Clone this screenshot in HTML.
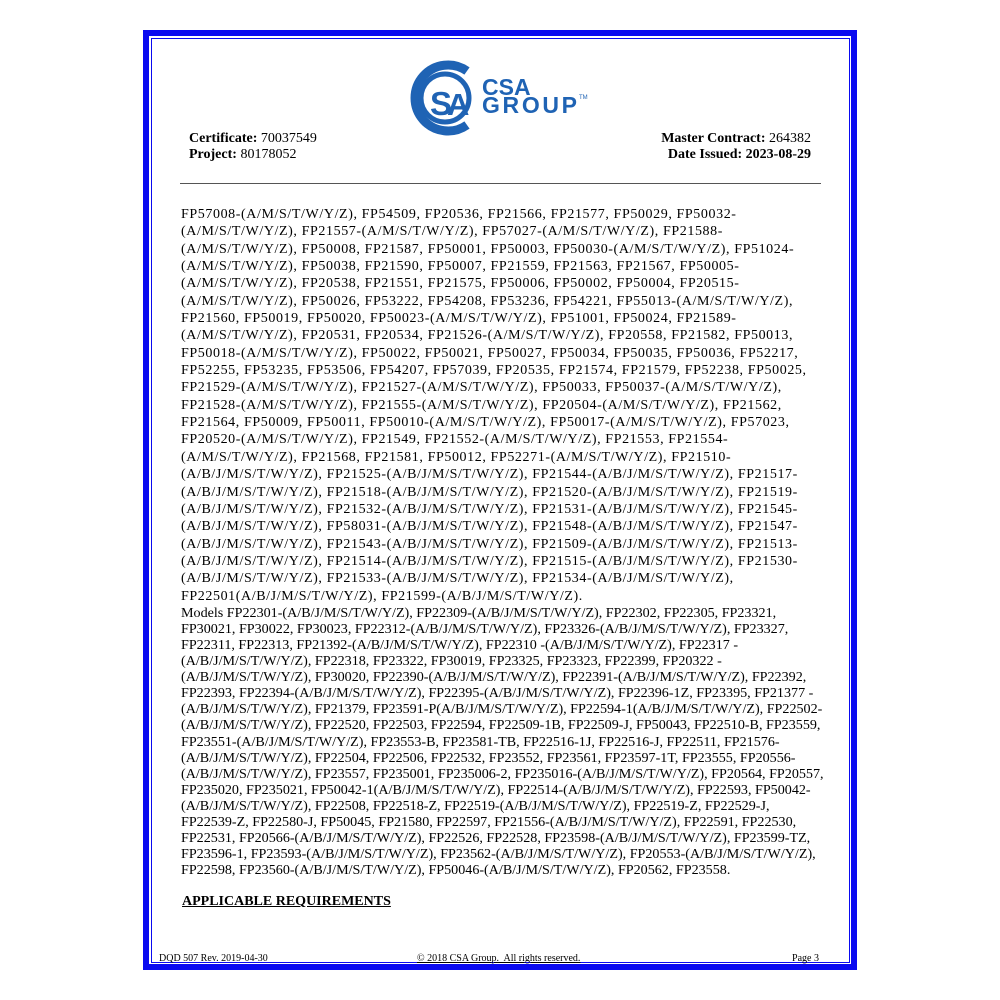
<!DOCTYPE html>
<html><head><meta charset="utf-8"><style>
body{margin:0;width:1000px;height:1000px;background:#fff;position:relative;font-family:"Liberation Serif",serif;color:#000}
.b1{position:absolute;left:143px;top:30px;width:702px;height:928px;border:6px solid #0a0af0}
.b2{position:absolute;left:151px;top:38px;width:697px;height:923px;border:1px solid #0a0af0}
.t{position:absolute;font-size:14px;white-space:nowrap;line-height:16px}
.body1{position:absolute;left:181px;top:206px;font-size:14px;letter-spacing:0.6px;line-height:17.35px;white-space:nowrap}
.body2{position:absolute;left:181px;top:605px;font-size:14.1px;line-height:16.06px;white-space:nowrap}
.f{position:absolute;top:953px;font-size:10px;white-space:nowrap}
</style></head><body>
<div class="b1"></div><div class="b2"></div>
<svg style="position:absolute;left:405px;top:55px" width="190" height="85" viewBox="0 0 190 85">
<path d="M62 16 A33 33 0 1 0 62 70" fill="none" stroke="#1f63b4" stroke-width="9"/>
<circle cx="40" cy="43" r="24" fill="#fff" stroke="#1f63b4" stroke-width="5"/>
<text x="25" y="60" font-family="Liberation Sans" font-weight="bold" font-size="33" fill="#1f63b4">S</text>
<text x="42" y="60" font-family="Liberation Sans" font-weight="bold" font-size="31" fill="#1f63b4">A</text>
<text x="77" y="40" font-family="Liberation Sans" font-weight="bold" font-size="23" fill="#1f63b4">CSA</text>
<text x="77" y="58" font-family="Liberation Sans" font-weight="bold" font-size="23" fill="#1f63b4" textLength="95">GROUP</text>
<text x="174" y="44" font-family="Liberation Sans" font-size="6" fill="#1f63b4">TM</text>
</svg>
<div class="t" style="left:189px;top:131px"><b>Certificate:</b> 70037549<br><b>Project:</b> 80178052</div>
<div class="t" style="right:189px;top:131px;text-align:right"><b>Master Contract:</b> 264382<br><b>Date Issued: 2023-08-29</b></div>
<div style="position:absolute;left:180px;top:183px;width:641px;height:1px;background:#555"></div>
<div class="body1">
FP57008-(A/M/S/T/W/Y/Z), FP54509, FP20536, FP21566, FP21577, FP50029, FP50032-<br>
(A/M/S/T/W/Y/Z), FP21557-(A/M/S/T/W/Y/Z), FP57027-(A/M/S/T/W/Y/Z), FP21588-<br>
(A/M/S/T/W/Y/Z), FP50008, FP21587, FP50001, FP50003, FP50030-(A/M/S/T/W/Y/Z), FP51024-<br>
(A/M/S/T/W/Y/Z), FP50038, FP21590, FP50007, FP21559, FP21563, FP21567, FP50005-<br>
(A/M/S/T/W/Y/Z), FP20538, FP21551, FP21575, FP50006, FP50002, FP50004, FP20515-<br>
(A/M/S/T/W/Y/Z), FP50026, FP53222, FP54208, FP53236, FP54221, FP55013-(A/M/S/T/W/Y/Z),<br>
FP21560, FP50019, FP50020, FP50023-(A/M/S/T/W/Y/Z), FP51001, FP50024, FP21589-<br>
(A/M/S/T/W/Y/Z), FP20531, FP20534, FP21526-(A/M/S/T/W/Y/Z), FP20558, FP21582, FP50013,<br>
FP50018-(A/M/S/T/W/Y/Z), FP50022, FP50021, FP50027, FP50034, FP50035, FP50036, FP52217,<br>
FP52255, FP53235, FP53506, FP54207, FP57039, FP20535, FP21574, FP21579, FP52238, FP50025,<br>
FP21529-(A/M/S/T/W/Y/Z), FP21527-(A/M/S/T/W/Y/Z), FP50033, FP50037-(A/M/S/T/W/Y/Z),<br>
FP21528-(A/M/S/T/W/Y/Z), FP21555-(A/M/S/T/W/Y/Z), FP20504-(A/M/S/T/W/Y/Z), FP21562,<br>
FP21564, FP50009, FP50011, FP50010-(A/M/S/T/W/Y/Z), FP50017-(A/M/S/T/W/Y/Z), FP57023,<br>
FP20520-(A/M/S/T/W/Y/Z), FP21549, FP21552-(A/M/S/T/W/Y/Z), FP21553, FP21554-<br>
(A/M/S/T/W/Y/Z), FP21568, FP21581, FP50012, FP52271-(A/M/S/T/W/Y/Z), FP21510-<br>
(A/B/J/M/S/T/W/Y/Z), FP21525-(A/B/J/M/S/T/W/Y/Z), FP21544-(A/B/J/M/S/T/W/Y/Z), FP21517-<br>
(A/B/J/M/S/T/W/Y/Z), FP21518-(A/B/J/M/S/T/W/Y/Z), FP21520-(A/B/J/M/S/T/W/Y/Z), FP21519-<br>
(A/B/J/M/S/T/W/Y/Z), FP21532-(A/B/J/M/S/T/W/Y/Z), FP21531-(A/B/J/M/S/T/W/Y/Z), FP21545-<br>
(A/B/J/M/S/T/W/Y/Z), FP58031-(A/B/J/M/S/T/W/Y/Z), FP21548-(A/B/J/M/S/T/W/Y/Z), FP21547-<br>
(A/B/J/M/S/T/W/Y/Z), FP21543-(A/B/J/M/S/T/W/Y/Z), FP21509-(A/B/J/M/S/T/W/Y/Z), FP21513-<br>
(A/B/J/M/S/T/W/Y/Z), FP21514-(A/B/J/M/S/T/W/Y/Z), FP21515-(A/B/J/M/S/T/W/Y/Z), FP21530-<br>
(A/B/J/M/S/T/W/Y/Z), FP21533-(A/B/J/M/S/T/W/Y/Z), FP21534-(A/B/J/M/S/T/W/Y/Z),<br>
FP22501(A/B/J/M/S/T/W/Y/Z), FP21599-(A/B/J/M/S/T/W/Y/Z).
</div>
<div class="body2">
Models FP22301-(A/B/J/M/S/T/W/Y/Z), FP22309-(A/B/J/M/S/T/W/Y/Z), FP22302, FP22305, FP23321,<br>
FP30021, FP30022, FP30023, FP22312-(A/B/J/M/S/T/W/Y/Z), FP23326-(A/B/J/M/S/T/W/Y/Z), FP23327,<br>
FP22311, FP22313, FP21392-(A/B/J/M/S/T/W/Y/Z), FP22310 -(A/B/J/M/S/T/W/Y/Z), FP22317 -<br>
(A/B/J/M/S/T/W/Y/Z), FP22318, FP23322, FP30019, FP23325, FP23323, FP22399, FP20322 -<br>
(A/B/J/M/S/T/W/Y/Z), FP30020, FP22390-(A/B/J/M/S/T/W/Y/Z), FP22391-(A/B/J/M/S/T/W/Y/Z), FP22392,<br>
FP22393, FP22394-(A/B/J/M/S/T/W/Y/Z), FP22395-(A/B/J/M/S/T/W/Y/Z), FP22396-1Z, FP23395, FP21377 -<br>
(A/B/J/M/S/T/W/Y/Z), FP21379, FP23591-P(A/B/J/M/S/T/W/Y/Z), FP22594-1(A/B/J/M/S/T/W/Y/Z), FP22502-<br>
(A/B/J/M/S/T/W/Y/Z), FP22520, FP22503, FP22594, FP22509-1B, FP22509-J, FP50043, FP22510-B, FP23559,<br>
FP23551-(A/B/J/M/S/T/W/Y/Z), FP23553-B, FP23581-TB, FP22516-1J, FP22516-J, FP22511, FP21576-<br>
(A/B/J/M/S/T/W/Y/Z), FP22504, FP22506, FP22532, FP23552, FP23561, FP23597-1T, FP23555, FP20556-<br>
(A/B/J/M/S/T/W/Y/Z), FP23557, FP235001, FP235006-2, FP235016-(A/B/J/M/S/T/W/Y/Z), FP20564, FP20557,<br>
FP235020, FP235021, FP50042-1(A/B/J/M/S/T/W/Y/Z), FP22514-(A/B/J/M/S/T/W/Y/Z), FP22593, FP50042-<br>
(A/B/J/M/S/T/W/Y/Z), FP22508, FP22518-Z, FP22519-(A/B/J/M/S/T/W/Y/Z), FP22519-Z, FP22529-J,<br>
FP22539-Z, FP22580-J, FP50045, FP21580, FP22597, FP21556-(A/B/J/M/S/T/W/Y/Z), FP22591, FP22530,<br>
FP22531, FP20566-(A/B/J/M/S/T/W/Y/Z), FP22526, FP22528, FP23598-(A/B/J/M/S/T/W/Y/Z), FP23599-TZ,<br>
FP23596-1, FP23593-(A/B/J/M/S/T/W/Y/Z), FP23562-(A/B/J/M/S/T/W/Y/Z), FP20553-(A/B/J/M/S/T/W/Y/Z),<br>
FP22598, FP23560-(A/B/J/M/S/T/W/Y/Z), FP50046-(A/B/J/M/S/T/W/Y/Z), FP20562, FP23558.
</div>
<div class="t" style="left:182px;top:894px;font-weight:bold;text-decoration:underline">APPLICABLE REQUIREMENTS</div>
<div class="f" style="left:159px">DQD 507 Rev. 2019-04-30</div>
<div class="f" style="left:417px;text-decoration:underline">© 2018 CSA Group.&nbsp; All rights reserved.</div>
<div class="f" style="right:181px">Page 3</div>
</body></html>
